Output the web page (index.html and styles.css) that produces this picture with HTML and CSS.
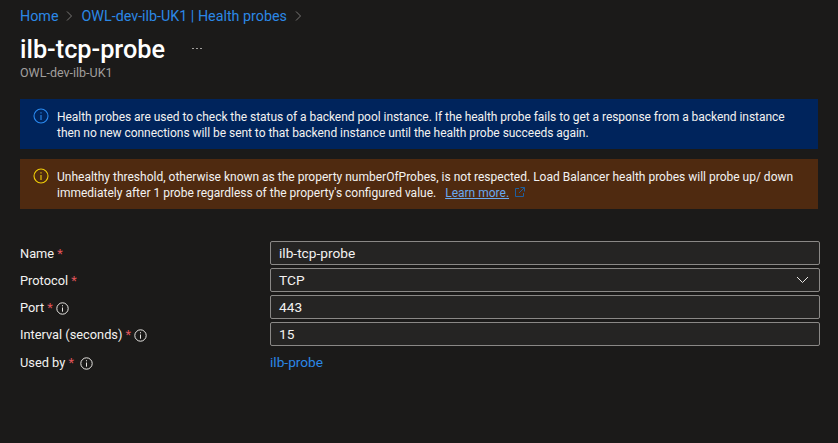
FILE: index.html
```html
<!DOCTYPE html>
<html lang="en">
<head>
  <meta charset="UTF-8">
  <title>ilb-tcp-probe</title>
  <link rel="stylesheet" href="styles.css">
</head>
<body>
  <nav class="breadcrumb">
    <a href="#">Home</a>
    <svg class="crumb-sep" width="7" height="12" viewBox="0 0 7 12"><path d="M1 1.5l4.5 4.5-4.5 4.5" fill="none" stroke="#797775"/></svg>
    <a href="#">OWL-dev-ilb-UK1 | Health probes</a>
    <svg class="crumb-sep" width="7" height="12" viewBox="0 0 7 12"><path d="M1 1.5l4.5 4.5-4.5 4.5" fill="none" stroke="#797775"/></svg>
  </nav>

  <header class="title-row">
    <h1>ilb-tcp-probe</h1>
    <span class="more"><i></i><i></i><i></i></span>
  </header>
  <div class="subtitle">OWL-dev-ilb-UK1</div>

  <div class="banner banner-info">
    <svg class="banner-icon" width="16" height="16" viewBox="0 0 16 16"><circle cx="8" cy="8" r="7" fill="none" stroke="#2a8af0" stroke-width="1.1"/><path d="M8 7v5M8 4.2v1.2" stroke="#2a8af0" stroke-width="1.1"/></svg>
    <p>Health probes are used to check the status of a backend pool instance. If the health probe fails to get a response from a backend instance then no new connections will be sent to that backend instance until the health probe succeeds again.</p>
  </div>

  <div class="banner banner-warn">
    <svg class="banner-icon" width="16" height="16" viewBox="0 0 16 16"><circle cx="8" cy="8" r="7" fill="none" stroke="#f2d007" stroke-width="1.1"/><path d="M8 7v5M8 4.2v1.2" stroke="#f2d007" stroke-width="1.1"/></svg>
    <p>Unhealthy threshold, otherwise known as the property numberOfProbes, is not respected. Load Balancer health probes will probe up/ down immediately after 1 probe regardless of the property's configured value. <a class="learn" href="#">Learn more.</a><svg class="ext" width="12" height="12" viewBox="0 0 12 12"><path d="M5 2.5H1.5v8h8V7M6.5 1.5h4v4M10.5 1.5L5 7" fill="none" stroke="#1f5f9e"/></svg></p>
  </div>

  <form class="form">
    <label class="field-label">Name <span class="req">*</span></label>
    <div class="input">ilb-tcp-probe</div>

    <label class="field-label">Protocol <span class="req">*</span></label>
    <div class="input select">TCP
      <svg width="13" height="8" viewBox="0 0 13 8"><path d="M1 1l5.5 5.5L12 1" fill="none" stroke="#e8e6e3"/></svg>
    </div>

    <label class="field-label">Port <span class="req">*</span>
      <svg class="tip" width="13" height="13" viewBox="0 0 13 13"><circle cx="6.5" cy="6.5" r="5.7" fill="none" stroke="#e8e6e3"/><path d="M6.5 5.5v4.2M6.5 3.2v1.1" stroke="#e8e6e3"/></svg>
    </label>
    <div class="input">443</div>

    <label class="field-label">Interval (seconds) <span class="req">*</span>
      <svg class="tip" width="13" height="13" viewBox="0 0 13 13"><circle cx="6.5" cy="6.5" r="5.7" fill="none" stroke="#e8e6e3"/><path d="M6.5 5.5v4.2M6.5 3.2v1.1" stroke="#e8e6e3"/></svg>
    </label>
    <div class="input">15</div>

    <label class="field-label used">Used by <span class="req">*</span>
      <svg class="tip" width="13" height="13" viewBox="0 0 13 13"><circle cx="6.5" cy="6.5" r="5.7" fill="none" stroke="#e8e6e3"/><path d="M6.5 5.5v4.2M6.5 3.2v1.1" stroke="#e8e6e3"/></svg>
    </label>
    <a class="used-link" href="#">ilb-probe</a>
  </form>
</body>
</html>
```

FILE: styles.css
```css
html, body { height: 100%; }
body { margin: 0; padding: 0 18px 0 20px; background: #1b1a19; color: #f3f2f1; font-family: Roboto, "Noto Sans", sans-serif; font-size: 12.8px; overflow: hidden; }
a { color: #2b88e6; text-decoration: none; }

.breadcrumb { display: flex; align-items: center; gap: 8px; height: 16px; padding-top: 8px; font-size: 14.3px; }
.crumb-sep { flex: none; }

.title-row { display: flex; align-items: center; height: 32px; margin-top: 10px; }
h1 { margin: 0; font-size: 25.3px; font-weight: 500; color: #fff; line-height: 32px; }
.more { display: flex; gap: 2px; margin-left: 27px; margin-top: -4px; }
.more i { width: 2px; height: 1px; background: #a19f9d; }
.subtitle { color: #a19f9d; font-size: 12.5px; line-height: 14px; }

.banner { box-sizing: border-box; display: flex; gap: 8px; padding: 10px 20px 0 13px; height: 50px; width: 798px; font-size: 12px; }
.banner p { margin: 0; line-height: 16px; }
.banner-icon { flex: none; margin-top: -1px; }
.banner-info { background: #00245c; margin-top: 19px; letter-spacing: -0.04px; }
.banner-warn { background: #4f2a10; margin-top: 10px; }
.learn { color: #69a9ef; text-decoration: underline; margin-left: 6px; }
.ext { margin-left: 5px; vertical-align: -1px; }

.form { display: grid; grid-template-columns: 250px 550px; grid-auto-rows: 24px; row-gap: 3px; margin-top: 32px; align-items: center; }
.req { color: #e0555b; }
.tip { vertical-align: -3px; }
.used .tip { margin-left: 3px; }
.input { box-sizing: border-box; height: 24px; line-height: 22px; padding: 0 8px; background: #252423; border: 1px solid #8a8886; border-radius: 2px; display: flex; justify-content: space-between; align-items: center; font-size: 13.7px; }
.select svg { margin-right: 2px; }
.used, .used-link { margin-top: 2px; }
.used-link { font-size: 13.7px; }
```
